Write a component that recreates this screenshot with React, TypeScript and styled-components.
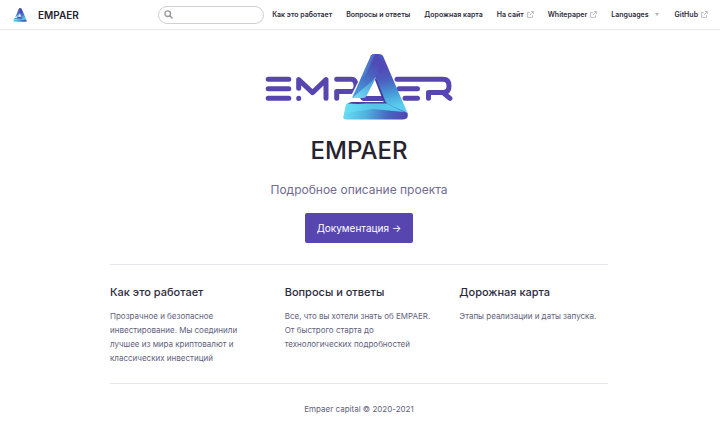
import React from "react";
import styled, { createGlobalStyle } from "styled-components";

const Global = createGlobalStyle`
  * { box-sizing: border-box; }
  body { margin: 0; background: #fff; color: #2c2b3d; font-family: Inter, "Noto Sans", sans-serif; font-size: 8px; }
  a { color: inherit; text-decoration: none; }
  h1, h2, p { margin: 0; }
`;

const Navbar = styled.header`
  display: flex;
  align-items: center;
  justify-content: space-between;
  height: 30px;
  padding: 0 12px 0 13px;
  border-bottom: 1px solid #e6e8eb;
`;
const Brand = styled.a`
  display: flex;
  align-items: center;
  gap: 11px;
  font-size: 10px;
  font-weight: 600;
  color: #24232f;
`;
const Tools = styled.div`
  display: flex;
  align-items: center;
  gap: 8px;
`;
const SearchBox = styled.label`
  display: flex;
  align-items: center;
  width: 106px;
  height: 18px;
  padding: 0 5px;
  gap: 4px;
  border: 1px solid #cfd0d4;
  border-radius: 9px;
`;
const SearchInput = styled.input`
  flex: 1;
  min-width: 0;
  border: 0;
  padding: 0;
  outline: 0;
  background: transparent;
  font: inherit;
`;
const Nav = styled.nav`
  display: flex;
  align-items: center;
  gap: 14px;
  font-size: 7px;
  font-weight: 600;
  white-space: nowrap;
`;
const NavLink = styled.a`
  display: flex;
  align-items: center;
  gap: 3px;
`;
const NavMenu = styled.button`
  display: flex;
  align-items: center;
  gap: 6px;
  padding: 0 2px 0 0;
  border: 0;
  background: none;
  color: inherit;
  font: inherit;
`;

const Page = styled.main`
  max-width: 500px;
  margin: 0 auto;
  padding-right: 2px;
`;
const Hero = styled.section`
  display: flex;
  flex-direction: column;
  align-items: center;
  padding: 24px 0 21px;
`;
const Title = styled.h1`
  margin-top: 15px;
  font-size: 24px;
  line-height: 32px;
  font-weight: 500;
  color: #24232f;
`;
const Tagline = styled.p`
  margin-top: 14px;
  font-size: 12px;
  line-height: 18px;
  color: #706c8f;
`;
const Action = styled.a`
  margin-top: 14px;
  padding: 0 12px;
  border-radius: 2px;
  background: #5746af;
  color: #fff;
  font-size: 10px;
  line-height: 30px;
  font-weight: 400;
`;
const Features = styled.section`
  display: grid;
  grid-template-columns: repeat(3, 1fr);
  column-gap: 26px;
  padding: 18px 0;
  border-top: 1px solid #e6e8eb;
`;
const FeatureTitle = styled.h2`
  font-size: 11px;
  line-height: 18px;
  font-weight: 500;
  color: #2c2b3d;
`;
const FeatureText = styled.p`
  margin-top: 8px;
  font-size: 8px;
  line-height: 14px;
  color: #625f7c;
`;
const Footer = styled.footer`
  padding: 18px 0;
  border-top: 1px solid #e6e8eb;
  text-align: center;
  line-height: 14px;
  color: #625f7c;
`;

const Letters = () => (
  <g fill="none" stroke="#5746af" strokeWidth="5" strokeLinecap="round" strokeLinejoin="round">
    <path d="M268.2 79.3H288.8M268.2 88.8H288.8M268.2 98.3H288.8" />
    <path d="M298.7 88.3V79.6L312.5 92.6L326 79.6V98.3M298.7 98.2V98.4" />
    <path d="M336.7 79.3H351Q356 79.3 356 86Q356 91.6 351 91.6H336.7V98.3" />
    <path d="M397 79.3H443Q449 79.3 449 86Q449 92.6 443 92.6H428.5V98.3M443 92.6L450 98.4M399 88.8H417.5M405 98.3H417.5" />
  </g>
);

const Mark = ({ id }: { id: string }) => (
  <g>
    <defs>
      <linearGradient id={`${id}-side`} gradientUnits="userSpaceOnUse" x1="376" y1="54" x2="389" y2="108">
        <stop offset="0" stopColor="#4658bc" />
        <stop offset=".25" stopColor="#5148b5" />
        <stop offset=".5" stopColor="#4b5fbf" />
        <stop offset=".75" stopColor="#4699d8" />
        <stop offset="1" stopColor="#5bcdf0" />
      </linearGradient>
      <linearGradient id={`${id}-left`} gradientUnits="userSpaceOnUse" x1="377" y1="62" x2="358" y2="90">
        <stop offset="0" stopColor="#5048b5" />
        <stop offset=".45" stopColor="#4965c1" />
        <stop offset="1" stopColor="#4793d6" />
      </linearGradient>
      <linearGradient id={`${id}-foot`} gradientUnits="userSpaceOnUse" x1="373" y1="80" x2="357" y2="98">
        <stop offset="0" stopColor="#4b9bda" />
        <stop offset="1" stopColor="#72d8f3" />
      </linearGradient>
      <linearGradient id={`${id}-base`} gradientUnits="userSpaceOnUse" x1="344" y1="110" x2="407" y2="116">
        <stop offset="0" stopColor="#67dcf3" />
        <stop offset=".35" stopColor="#50b2df" />
        <stop offset=".7" stopColor="#4767bf" />
        <stop offset="1" stopColor="#5345b1" />
      </linearGradient>
      <linearGradient id={`${id}-fold`} gradientUnits="userSpaceOnUse" x1="345" y1="0" x2="402" y2="0">
        <stop offset="0" stopColor="#67dff5" />
        <stop offset=".5" stopColor="#55c5e9" />
        <stop offset="1" stopColor="#55cbee" />
      </linearGradient>
    </defs>
    <path fill="#fff" d="M364 70L350 98L345 103H384L376 78Z" />
    <path fill="#5146b0" d="M359 96H382L385 101H364Q361 101 359 96Z" />
    <path fill={`url(#${id}-side)`} d="M371 56Q372 54 374 54H379Q382 54 383 56L407.5 113Q408 117 405 119L385 103L375.5 77L365 82Z" />
    <path fill={`url(#${id}-left)`} d="M371 55.5L352 98L366 90L375.7 77L382 62L378 54H374Q372 54 371 55.5Z" />
    <path fill="#4b9cda" opacity=".5" d="M371 56L360 80L366 74L375 54H374Q372 54 371 56Z" />
    <path fill={`url(#${id}-foot)`} d="M375.7 78L352 98H363Q366 98 367 95Z" />
    <path fill={`url(#${id}-base)`} d="M349 103H386L407.5 113Q409 119.5 403 119.5H347Q342 119.5 343.5 116L346 105Q347 103 349 103Z" />
    <path fill={`url(#${id}-fold)`} d="M349 103H386L404 112L373 109L344.5 113L346 105Q347 103 349 103Z" />
    <path fill="#463f9f" d="M348 103.5Q350 101.5 353 102H386L387 103.5H366L358 104Z" />
    <path fill="#433c9b" d="M375.7 77L386 103H384L375 80Z" />
  </g>
);

const External = () => (
  <svg width="7" height="7" viewBox="0 0 12 12" fill="none" stroke="#a9a9b2" strokeWidth="1.3" aria-hidden="true">
    <path d="M5 2.5H1V11H9.5V7M7 1H11V5M11 1L5 7" />
  </svg>
);

const links = [
  { text: "Как это работает" },
  { text: "Вопросы и ответы" },
  { text: "Дорожная карта" },
  { text: "На сайт", external: true },
  { text: "Whitepaper", external: true },
];
const features = [
  { title: "Как это работает", text: "Прозрачное и безопасное инвестирование. Мы соединили лучшее из мира криптовалют и классических инвестиций" },
  { title: "Вопросы и ответы", text: "Все, что вы хотели знать об EMPAER. От быстрого старта до технологических подробностей" },
  { title: "Дорожная карта", text: "Этапы реализации и даты запуска." },
];

export default function App() {
  return (
    <>
      <Global />
      <Navbar>
        <Brand href="#">
          <svg width="14" height="14" viewBox="342 53 67 68" aria-hidden="true"><Mark id="small" /></svg>
          EMPAER
        </Brand>
        <Tools>
          <SearchBox>
            <svg width="9" height="9" viewBox="0 0 9 9" fill="none" stroke="#999" strokeWidth="1.4" aria-hidden="true">
              <circle cx="3.7" cy="3.7" r="2.8" /><path d="M5.8 5.8L8.5 8.5" />
            </svg>
            <SearchInput type="search" aria-label="Search" />
          </SearchBox>
          <Nav>
            {links.map((l) => (
              <NavLink key={l.text} href="#">{l.text}{l.external && <External />}</NavLink>
            ))}
            <NavMenu type="button">
              Languages
              <svg width="4" height="3" viewBox="0 0 4 3" aria-hidden="true"><path d="M0 0H4L2 3Z" fill="#b4b4bc" /></svg>
            </NavMenu>
            <NavLink href="#">GitHub<External /></NavLink>
          </Nav>
        </Tools>
      </Navbar>
      <Page>
        <Hero>
          <svg width="188" height="66" viewBox="265 54 188 66" role="img" aria-label="EMPAER">
            <Letters />
            <Mark id="large" />
          </svg>
          <Title>EMPAER</Title>
          <Tagline>Подробное описание проекта</Tagline>
          <Action href="#">Документация →</Action>
        </Hero>
        <Features>
          {features.map((f) => (
            <article key={f.title}>
              <FeatureTitle>{f.title}</FeatureTitle>
              <FeatureText>{f.text}</FeatureText>
            </article>
          ))}
        </Features>
        <Footer>Empaer capital © 2020-2021</Footer>
      </Page>
    </>
  );
}
